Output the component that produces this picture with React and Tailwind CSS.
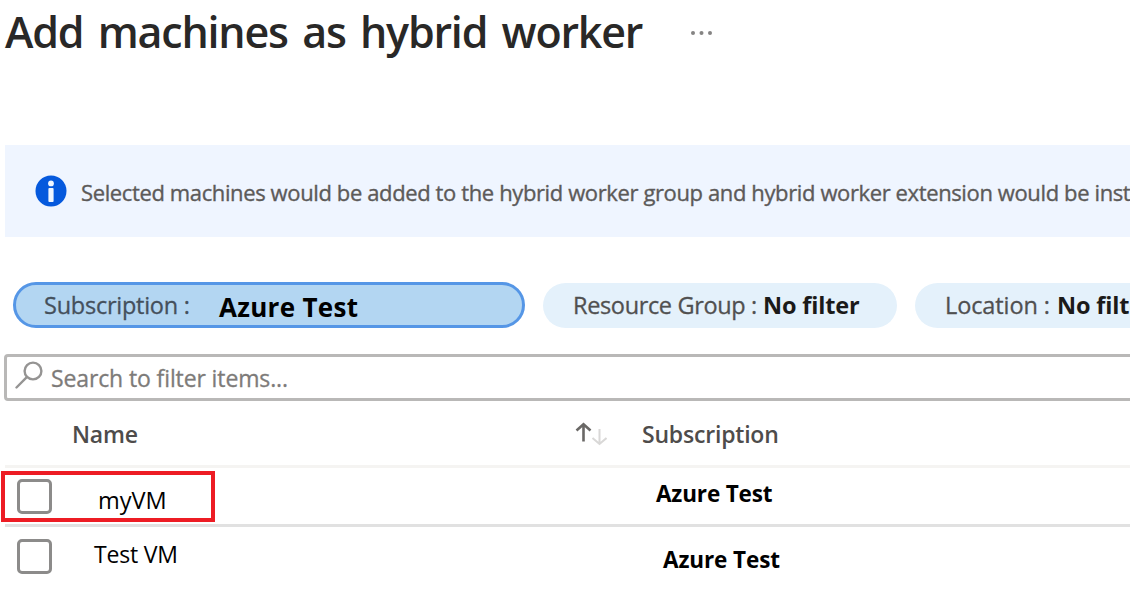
import React from "react";

function InfoIcon() {
  return (
    <svg className="h-8 w-8 shrink-0" viewBox="0 0 32 32">
      <circle cx="16" cy="16" r="15.5" fill="#0559dd" />
      <circle cx="16" cy="8.4" r="2.9" fill="#f0f6ff" />
      <rect x="13.4" y="13" width="5.2" height="14" rx="1" fill="#f0f6ff" />
    </svg>
  );
}

function SearchIcon() {
  return (
    <svg className="h-7 w-7 shrink-0" viewBox="0 0 28 28" fill="none" stroke="#959493" strokeWidth="2.4" strokeLinecap="round">
      <circle cx="18" cy="10" r="8.4" />
      <path d="M11.8 16.2 L1.5 26.5" />
    </svg>
  );
}

function SortIcon() {
  return (
    <svg className="h-6 w-8 shrink-0" viewBox="0 0 32 24" fill="none">
      <path d="M8.5 19.5V3M1.5 8.5L8.5 2.2L15.5 8.5" stroke="#6a6866" strokeWidth="2.6" />
      <path d="M24.5 7V21.5M17.5 16L24.5 22L31.5 16" stroke="#d9d8d7" strokeWidth="2" />
    </svg>
  );
}

function MoreIcon() {
  return (
    <svg className="mt-[29px] h-2 w-6" viewBox="0 0 24 8" fill="#858483">
      <circle cx="3" cy="4" r="2" />
      <circle cx="11.5" cy="4" r="2" />
      <circle cx="20" cy="4" r="2" />
    </svg>
  );
}

function Checkbox() {
  return <span role="checkbox" aria-checked="false" className="h-[35px] w-[35px] shrink-0 rounded-[5px] border-3 border-[#8c8b8a] bg-white" />;
}

function Pill({ label, labelClass }) {
  return (
    <div className="flex h-[45px] w-[354px] shrink-0 items-center rounded-full bg-[#e4f1fb] pt-[2px] pl-[30px]">
      <span className={labelClass}>{label}</span>
      <b className="tracking-[-0.15px] text-[#1b1a19]">No filter</b>
    </div>
  );
}

export default function App() {
  return (
    <main className="h-[609px] w-[1130px] overflow-hidden bg-white font-['Open_Sans',sans-serif] whitespace-nowrap text-black">
      <header className="flex h-[145px] items-start pl-[5px]">
        <h1 className="w-[685px] text-[43px] leading-[64px] font-semibold tracking-[-1.2px] text-[#292827] [word-spacing:4.4px]">Add machines as hybrid worker</h1>
        <MoreIcon />
      </header>

      <section className="ml-[5px] flex h-[92px] items-center bg-[#eff5ff] pl-[30px] text-[22px] text-[#5c5a59]">
        <InfoIcon />
        <span className="mt-[2px] ml-[14px] tracking-[-0.38px] [-webkit-text-stroke:0.35px_#5c5a59]">Selected machines would be added to the hybrid worker group and hybrid worker extension would be installed</span>
      </section>

      <nav className="mt-[45px] ml-[13px] flex h-[46px] items-center gap-[18px] text-[23.5px]">
        <div className="flex h-[46px] w-[512px] shrink-0 items-center rounded-full border-3 border-[#5596e6] bg-[#b3d6f2] pl-[28px]">
          <span className="mt-[2px] w-[175px] tracking-[-0.25px] text-[#44505c] [-webkit-text-stroke:0.3px_#44505c]">Subscription :</span>
          <b className="mt-[4px] text-[26px] tracking-[0.3px]">Azure Test</b>
        </div>
        <Pill label="Resource Group :" labelClass="w-[190px] tracking-[-0.35px] text-[#505050] [-webkit-text-stroke:0.3px_#505050]" />
        <Pill label="Location :" labelClass="w-[112px] tracking-[-0.1px] text-[#505050] [-webkit-text-stroke:0.3px_#505050]" />
      </nav>

      <div className="mt-[26px] ml-[4px] flex h-[47px] w-[1140px] items-start rounded-[4px] border-3 border-[#b9b8b7] pl-[8px] text-[#7d7b79]">
        <span className="mt-[4px]"><SearchIcon /></span>
        <span className="mt-[6px] ml-[8px] text-[23px] leading-[30px] tracking-[-0.12px] [-webkit-text-stroke:0.3px_#7d7b79]">Search to filter items...</span>
      </div>

      <div className="ml-[5px] flex h-[67px] items-start border-b-3 border-[#f5f4f2] text-[23px] leading-[30px] font-semibold text-[#4e4c4b]">
        <span className="mt-[18px] ml-[67px] w-[499px] tracking-[-0.2px]">Name</span>
        <span className="mt-[21px] w-[70px] pl-[4px]"><SortIcon /></span>
        <span className="mt-[18px] ml-[1px] tracking-[-0.2px]">Subscription</span>
      </div>

      <div className="relative ml-[5px] flex h-[59px] items-start border-b-3 border-[#e1e1e1] pl-[12px] leading-[30px]">
        <span className="mt-[11px] flex"><Checkbox /></span>
        <span className="mt-[17px] ml-[46px] w-[558px] text-[23.5px]">myVM</span>
        <b className="mt-[11px] text-[22.5px] tracking-[-0.15px]">Azure Test</b>
        <div className="absolute top-[3px] -left-[4px] h-[51px] w-[214px] border-4 border-[#ed1c24]" />
      </div>

      <div className="ml-[5px] flex items-start pl-[12px] leading-[30px]">
        <span className="mt-[12px] flex"><Checkbox /></span>
        <span className="mt-[12px] ml-[42px] w-[569px] text-[23px] tracking-[-0.2px]">Test VM</span>
        <b className="mt-[18px] text-[22.5px] tracking-[-0.1px]">Azure Test</b>
      </div>
    </main>
  );
}
